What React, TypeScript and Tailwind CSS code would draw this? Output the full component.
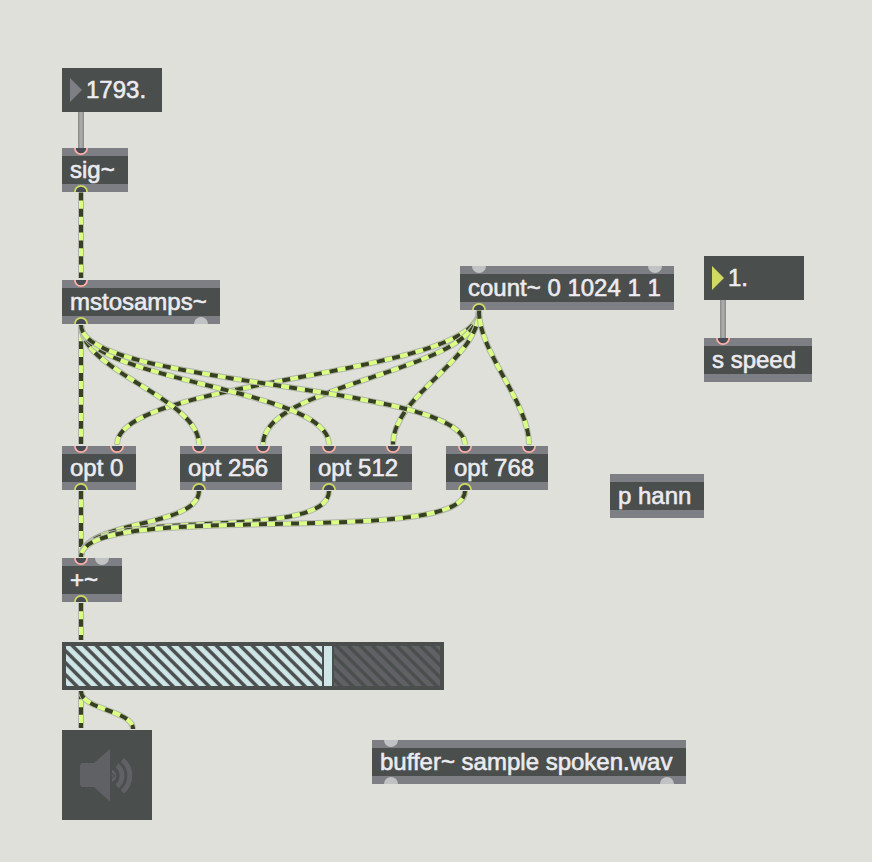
type Port = { x: number; hot?: boolean };

type BoxProps = {
  place: string;
  label: string;
  inlets?: Port[];
  outlets?: Port[];
};

const Ports = ({ ports, outlet }: { ports: Port[]; outlet?: boolean }) => (
  <svg className="absolute inset-0 h-full w-full">
    {ports.map((p) => (
      <circle
        key={p.x}
        cx={p.x}
        cy={outlet ? 8 : 0}
        r={p.hot ? 6.1 : 7}
        fill={p.hot ? '#454b54' : '#c1c2c4'}
        stroke={p.hot ? (outlet ? '#d0d960' : '#ffafa3') : 'none'}
        strokeWidth="1.8"
      />
    ))}
  </svg>
);

const ObjectBox = ({ place, label, inlets = [], outlets = [] }: BoxProps) => (
  <div className={`absolute flex h-11 flex-col bg-[#4a4e4c] ${place}`}>
    <div className="relative h-2 overflow-hidden bg-[#7e7f84]">
      <Ports ports={inlets} />
    </div>
    <div className="h-7 pl-2 leading-7 whitespace-pre">{label}</div>
    <div className="relative h-2 overflow-hidden bg-[#7e7f84]">
      <Ports ports={outlets} outlet />
    </div>
  </div>
);

const NumberBox = ({ place, value, arrow }: { place: string; value: string; arrow: string }) => (
  <div className={`absolute flex h-11 w-[100px] items-center bg-[#4a4e4c] pl-2 ${place}`}>
    <svg className="h-6 w-3" viewBox="0 0 12 24">
      <path d="M0 0L12 12L0 24Z" fill={arrow} />
    </svg>
    <span className="ml-1">{value}</span>
  </div>
);

// x1, y1, x2, y2, bend (share of the height used by each control handle)
const signalCables = [
  [81, 192.5, 81, 278, 0.5],
  [479, 310.7, 117, 444.5, 0.49],
  [479, 310.7, 263, 444.5, 0.46],
  [479, 310.7, 393, 444.5, 0.37],
  [479, 310.7, 529, 444.5, 0.32],
  [81, 325, 81, 444, 0.5],
  [81, 325, 199, 444.5, 0.39],
  [81, 325, 329, 444.5, 0.48],
  [81, 325, 465, 444.5, 0.51],
  [81, 491, 81, 557, 0.5],
  [199, 491, 81, 557, 0.56],
  [329, 491, 81, 557, 0.81],
  [465, 491, 81, 557, 0.88],
  [81, 603, 81, 640, 0.5],
  [81, 691, 81, 728, 0.5],
  [81, 691, 133, 729, 0.5],
];

const controlCables = [
  [81, 112, 148],
  [723, 300, 338],
];

const Cables = () => (
  <svg className="absolute inset-0" width="872" height="862" fill="none">
    {signalCables.map(([x1, y1, x2, y2, bend], i) => {
      const handle = (y2 - y1) * bend;
      const d = `M${x1} ${y1}C${x1} ${y1 + handle} ${x2} ${y2 - handle} ${x2} ${y2}`;
      return (
        <g key={i}>
          <path d={d} stroke="#b1b3ad" strokeWidth="6" />
          <path d={d} stroke="#dbff82" strokeWidth="4" />
          <path d={d} stroke="#373f25" strokeWidth="4" strokeDasharray="8 8" />
        </g>
      );
    })}
    {controlCables.map(([x, top, bottom]) => (
      <g key={x}>
        <path d={`M${x} ${top}V${bottom}`} stroke="#8f908e" strokeWidth="6" />
        <path d={`M${x} ${top}V${bottom}`} stroke="#aaaaaa" strokeWidth="3" />
      </g>
    ))}
  </svg>
);

const Slider = () => (
  <svg className="absolute top-[642px] left-[62px]" width="382" height="48">
    <defs>
      <pattern id="stripes" width="12" height="12" patternUnits="userSpaceOnUse" x="10.7" y="4">
        <path d="M-12 -12L24 24M0 -12L24 12M-12 0L12 24" stroke="#4a4e4c" strokeWidth="3.4" />
      </pattern>
    </defs>
    <rect width="382" height="48" fill="#4a4e4c" />
    <rect x="4" y="4" width="256" height="40" fill="#cee6e8" />
    <rect x="272" y="4" width="106" height="40" fill="#606165" />
    <rect x="4" y="4" width="256" height="40" fill="url(#stripes)" />
    <rect x="272" y="4" width="106" height="40" fill="url(#stripes)" />
    <rect x="262" y="4" width="8" height="40" fill="#cee6e8" />
  </svg>
);

const Speaker = () => (
  <div className="absolute top-[730px] left-[62px] h-[90px] w-[90px] bg-[#4a4e4c]">
    <svg width="90" height="90" fill="none">
      <path d="M20 33H32L48 19V71.500L32 57H20L18 55V35Z" fill="#606165" />
      <g stroke="#606165" strokeWidth="5">
        <path d="M60.400 29.800A21 21 0 0 1 60.400 61.800" />
        <path d="M55 35.300A13.500 13.500 0 0 1 55 56.300" />
      </g>
      <path d="M50 39.500A6.700 6.700 0 0 1 50 52V48.500L53.500 45.700L50 43Z" fill="#606165" />
      <circle cx="50.500" cy="45.700" r="1" fill="#606165" />
    </svg>
  </div>
);

export default function App() {
  return (
    <div className="relative h-[862px] w-[872px] overflow-hidden bg-[#dfe0da] font-['Liberation_Sans',Arial,sans-serif] text-2xl text-[#ebebf0] [-webkit-text-stroke:0.6px_#ebebf0]">
      <NumberBox place="left-[62px] top-[68px]" value="1793." arrow="#7e7f84" />
      <NumberBox place="left-[704px] top-[256px]" value="1." arrow="#d0d960" />
      <ObjectBox place="left-[62px] top-[148px] w-[66px]" label="sig~" inlets={[{ x: 19, hot: true }]} outlets={[{ x: 19, hot: true }]} />
      <ObjectBox place="left-[62px] top-[280px] w-[158px]" label="mstosamps~" inlets={[{ x: 19, hot: true }]} outlets={[{ x: 19, hot: true }, { x: 139 }]} />
      <ObjectBox place="left-[460px] top-[266px] w-[214px]" label="count~ 0 1024 1 1" inlets={[{ x: 19 }, { x: 195 }]} outlets={[{ x: 19, hot: true }]} />
      <ObjectBox place="left-[704px] top-[338px] w-[108px]" label="s speed" inlets={[{ x: 19, hot: true }]} />
      <ObjectBox place="left-[62px] top-[446px] w-[74px]" label="opt 0" inlets={[{ x: 19, hot: true }, { x: 55, hot: true }]} outlets={[{ x: 19, hot: true }]} />
      <ObjectBox place="left-[180px] top-[446px] w-[102px]" label="opt 256" inlets={[{ x: 19, hot: true }, { x: 83, hot: true }]} outlets={[{ x: 19, hot: true }]} />
      <ObjectBox place="left-[310px] top-[446px] w-[102px]" label="opt 512" inlets={[{ x: 19, hot: true }, { x: 83, hot: true }]} outlets={[{ x: 19, hot: true }]} />
      <ObjectBox place="left-[446px] top-[446px] w-[102px]" label="opt 768" inlets={[{ x: 19, hot: true }, { x: 83, hot: true }]} outlets={[{ x: 19, hot: true }]} />
      <ObjectBox place="left-[610px] top-[474px] w-[94px]" label="p hann" />
      <ObjectBox place="left-[62px] top-[558px] w-[60px]" label="+~" inlets={[{ x: 19, hot: true }, { x: 40 }]} outlets={[{ x: 19, hot: true }]} />
      <ObjectBox place="left-[372px] top-[740px] w-[314px]" label="buffer~ sample spoken.wav" inlets={[{ x: 19 }]} outlets={[{ x: 19 }, { x: 295 }]} />
      <Slider />
      <Speaker />
      <Cables />
    </div>
  );
}
